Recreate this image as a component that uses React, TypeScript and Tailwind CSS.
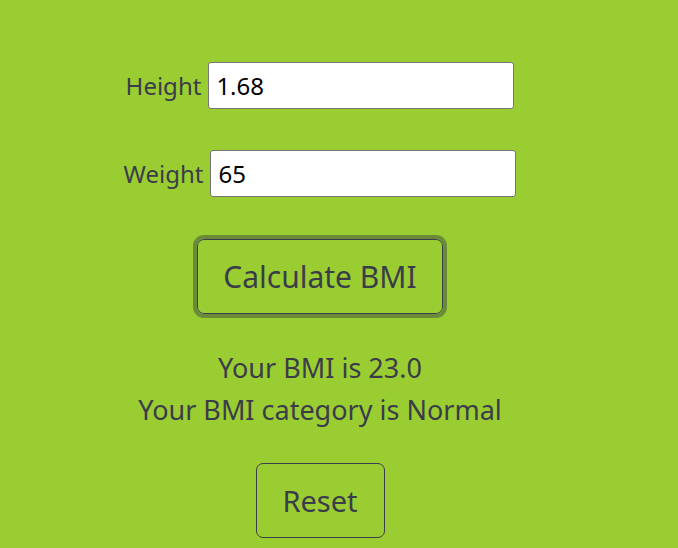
import React from "react";

export default function App() {
  const font = { fontFamily: '"Noto Sans", "Open Sans", sans-serif' };
  return (
    <div className="min-h-screen w-full bg-[#9acd32] text-[#3b3c4a]" style={font}>
      <div className="w-[640px] flex flex-col items-center pt-[62px]">
        <div className="flex items-center gap-[7px]">
          <label className="text-[24px] leading-none">Height</label>
          <input
            defaultValue="1.68"
            className="h-[47px] w-[306px] bg-white border border-[#767676] rounded-[3px] px-[7px] text-[24px] text-black outline-none"
            style={font}
          />
        </div>
        <div className="flex items-center gap-[7px] mt-[41px]">
          <label className="text-[24px] leading-none">Weight</label>
          <input
            defaultValue="65"
            className="h-[47px] w-[306px] bg-white border border-[#767676] rounded-[3px] px-[7px] text-[24px] text-black outline-none"
            style={font}
          />
        </div>
        <button
          className="mt-[42px] h-[75px] w-[246px] rounded-[7px] border border-[#3b3d4a] outline-4 outline-solid outline-[#6a8a3a] bg-transparent text-[30px] text-[#3b3c4a]"
          style={font}
        >
          Calculate BMI
        </button>
        <div className="mt-[33px] flex flex-col items-center text-[27px] leading-[42px]">
          <p>Your BMI is 23.0</p>
          <p>Your BMI category is Normal</p>
        </div>
        <button
          className="mt-[32px] h-[75px] w-[129px] rounded-[7px] border border-[#3b3d4a] bg-transparent text-[29px] text-[#3b3c4a]"
          style={font}
        >
          Reset
        </button>
      </div>
    </div>
  );
}
